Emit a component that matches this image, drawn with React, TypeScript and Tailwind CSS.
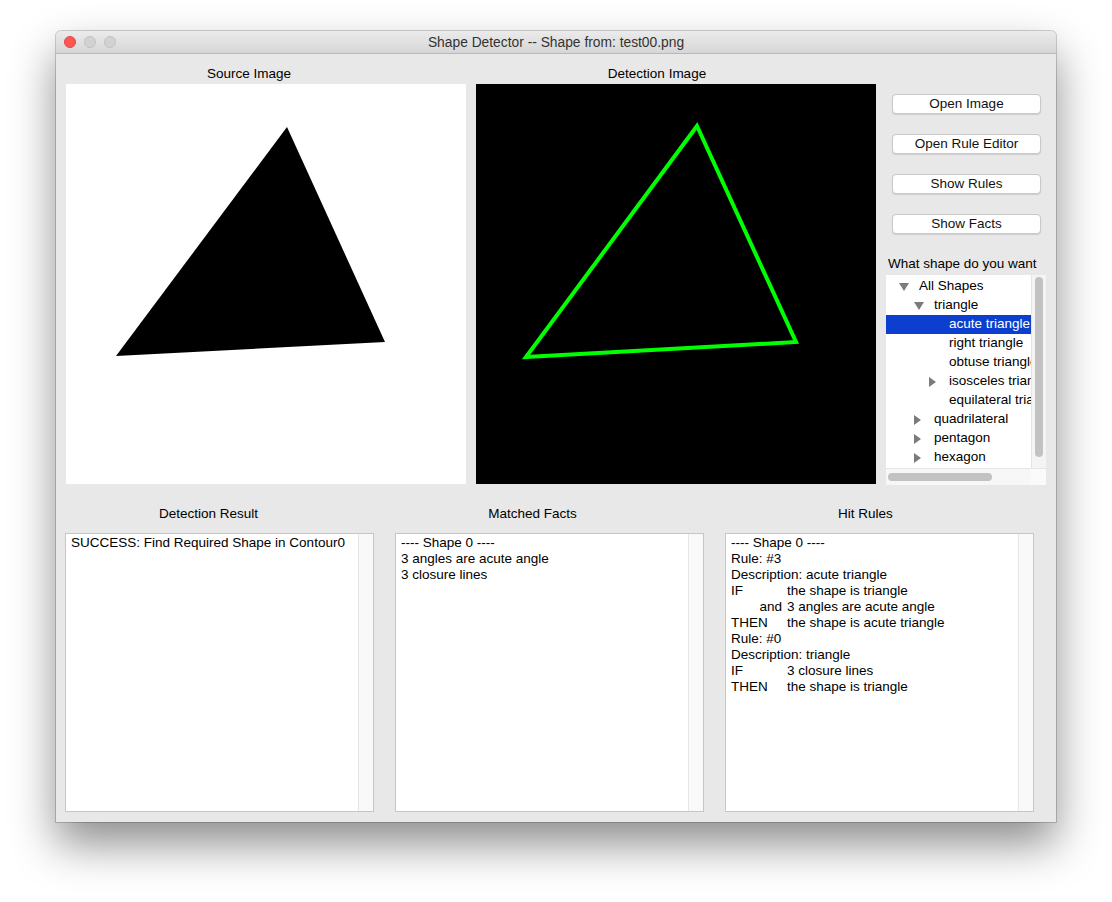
import React from 'react'

// ── Helpers ───────────────────────────────────────────────────────────────────

const font = { fontFamily: '"Liberation Sans", Arial, sans-serif' }

function DownArrow() {
  return (
    <svg width="10" height="8" viewBox="0 0 10 8">
      <path d="M0 0 L10 0 L5 8 Z" fill="#7b7b7b" />
    </svg>
  )
}

function RightArrow() {
  return (
    <svg width="7" height="10" viewBox="0 0 7 10">
      <path d="M0 0 L7 5 L0 10 Z" fill="#7b7b7b" />
    </svg>
  )
}

interface TreeRow {
  label: string
  level: number
  arrow?: 'down' | 'right'
  selected?: boolean
}

const rows: TreeRow[] = [
  { label: 'All Shapes', level: 0, arrow: 'down' },
  { label: 'triangle', level: 1, arrow: 'down' },
  { label: 'acute triangle', level: 2, selected: true },
  { label: 'right triangle', level: 2 },
  { label: 'obtuse triangle', level: 2 },
  { label: 'isosceles triangle', level: 2, arrow: 'right' },
  { label: 'equilateral triangle', level: 2 },
  { label: 'quadrilateral', level: 1, arrow: 'right' },
  { label: 'pentagon', level: 1, arrow: 'right' },
  { label: 'hexagon', level: 1, arrow: 'right' },
]

const indent = ['pl-[13px]', 'pl-[28px]', 'pl-[43px]']

function Button({ children }: { children: React.ReactNode }) {
  return (
    <button className="h-[20px] w-[149px] ml-[6px] rounded-[4px] bg-white border border-[#c9c9c9] shadow-[0_1px_1px_rgba(0,0,0,0.12)] text-[13.5px] leading-[18px] text-[#111]">
      {children}
    </button>
  )
}

function TextBox({ children }: { children: React.ReactNode }) {
  return (
    <div className="h-[279px] flex bg-white border border-[#c6c6c6]">
      <div className="flex-1 px-[5px] pt-[1px] text-[13.5px] leading-[16px] text-black whitespace-nowrap overflow-hidden">
        {children}
      </div>
      <div className="w-[15px] bg-[#f9f9f9] border-l border-[#e6e6e6]" />
    </div>
  )
}

function Rule({ head, right, children }: { head: string; right?: boolean; children: string }) {
  return (
    <div>
      <span className={right ? 'inline-block w-[56px] text-right pr-[5px]' : 'inline-block w-[56px]'}>
        {head}
      </span>
      {children}
    </div>
  )
}

// ── App ───────────────────────────────────────────────────────────────────────

export default function App() {
  return (
    <div className="w-[1112px] h-[902px] bg-white pt-[31px] pl-[56px]" style={font}>
      <div className="w-[1000px] h-[791px] flex flex-col bg-[#e8e8e8] rounded-t-[5px] shadow-[0_22px_45px_rgba(0,0,0,0.45),0_0_0_1px_rgba(0,0,0,0.18)]">
        {/* Title bar */}
        <div className="h-[23px] shrink-0 relative flex items-center justify-center rounded-t-[5px] bg-gradient-to-b from-[#ebebeb] to-[#d6d6d6] border-b border-[#b8b8b8]">
          <div className="absolute left-[8px] top-[5px] flex gap-[8px]">
            <span className="w-[12px] h-[12px] rounded-full bg-[#fc5753] border border-[#df4744]" />
            <span className="w-[12px] h-[12px] rounded-full bg-[#d2d2d2] border border-[#c2c2c2]" />
            <span className="w-[12px] h-[12px] rounded-full bg-[#d2d2d2] border border-[#c2c2c2]" />
          </div>
          <span className="pt-[2px] text-[13.8px] text-[#333]">Shape Detector -- Shape from: test00.png</span>
        </div>

        {/* Top area */}
        <div className="flex pt-[9px] pl-[10px] gap-[10px]">
          <div className="flex flex-col">
            <div className="h-[21px] pr-[34px] text-center text-[13.5px] text-black leading-[21px]">Source Image</div>
            <div className="w-[400px] h-[400px] bg-white">
              <svg width="400" height="400" viewBox="0 0 400 400">
                <path d="M221 43 L319 258 L50 272 Z" fill="#000" />
              </svg>
            </div>
          </div>
          <div className="flex flex-col">
            <div className="h-[21px] pr-[38px] text-center text-[13.5px] text-black leading-[21px]">Detection Image</div>
            <div className="w-[400px] h-[400px] bg-black">
              <svg width="400" height="400" viewBox="0 0 400 400">
                <path
                  d="M221 42 L320 258 L50 273 Z"
                  fill="none"
                  stroke="#00ff00"
                  strokeWidth="4"
                  strokeLinejoin="miter"
                />
              </svg>
            </div>
          </div>

          {/* Controls */}
          <div className="w-[160px] flex flex-col pt-[31px]">
            <div className="flex flex-col gap-[20px]">
              <Button>Open Image</Button>
              <Button>Open Rule Editor</Button>
              <Button>Show Rules</Button>
              <Button>Show Facts</Button>
            </div>
            <div className="mt-[21px] h-[18px] pl-[2px] text-[13.5px] leading-[18px] text-black whitespace-nowrap">
              What shape do you want
            </div>
            <div className="mt-[2px] h-[210px] flex flex-col bg-white">
              <div className="flex-1 flex">
                <div className="w-[145px] overflow-hidden pt-[2px]">
                  {rows.map((r) => (
                    <div
                      key={r.label}
                      className={
                        'h-[19px] flex items-center whitespace-nowrap text-[13.5px] ' +
                        indent[r.level] +
                        (r.selected ? ' bg-[#0c3fcf] text-white' : ' text-black')
                      }
                    >
                      <span className="w-[20px] shrink-0 flex items-center">
                        {r.arrow === 'down' && <DownArrow />}
                        {r.arrow === 'right' && <RightArrow />}
                      </span>
                      {r.label}
                    </div>
                  ))}
                </div>
                <div className="w-[15px] bg-[#f4f4f4] border-l border-[#e4e4e4] pt-[2px] flex justify-center">
                  <div className="w-[8px] h-[180px] rounded-full bg-[#c2c2c2]" />
                </div>
              </div>
              <div className="h-[17px] flex bg-[#f7f7f7] border-t border-[#e6e6e6]">
                <div className="w-[145px] pt-[4px] pl-[2px]">
                  <div className="w-[104px] h-[8px] rounded-full bg-[#c2c2c2]" />
                </div>
                <div className="flex-1 bg-[#fafafa]" />
              </div>
            </div>
          </div>
        </div>

        {/* Bottom area */}
        <div className="grid grid-cols-[309px_309px_309px] gap-x-[21px] pl-[9px] mt-[18px]">
          <div className="h-[22px] pr-[22px] text-center text-[13.5px] leading-[22px] text-black">Detection Result</div>
          <div className="h-[22px] pr-[34px] text-center text-[13.5px] leading-[22px] text-black">Matched Facts</div>
          <div className="h-[22px] pr-[28px] text-center text-[13.5px] leading-[22px] text-black">Hit Rules</div>
          <div className="mt-[8px]">
            <TextBox>
              <div>SUCCESS: Find Required Shape in Contour0</div>
            </TextBox>
          </div>
          <div className="mt-[8px]">
            <TextBox>
              <div>---- Shape 0 ----</div>
              <div>3 angles are acute angle</div>
              <div>3 closure lines</div>
            </TextBox>
          </div>
          <div className="mt-[8px]">
            <TextBox>
              <div>---- Shape 0 ----</div>
              <div>Rule: #3</div>
              <div>Description: acute triangle</div>
              <Rule head="IF">the shape is triangle</Rule>
              <Rule head="and" right>3 angles are acute angle</Rule>
              <Rule head="THEN">the shape is acute triangle</Rule>
              <div>Rule: #0</div>
              <div>Description: triangle</div>
              <Rule head="IF">3 closure lines</Rule>
              <Rule head="THEN">the shape is triangle</Rule>
            </TextBox>
          </div>
        </div>
      </div>
    </div>
  )
}
